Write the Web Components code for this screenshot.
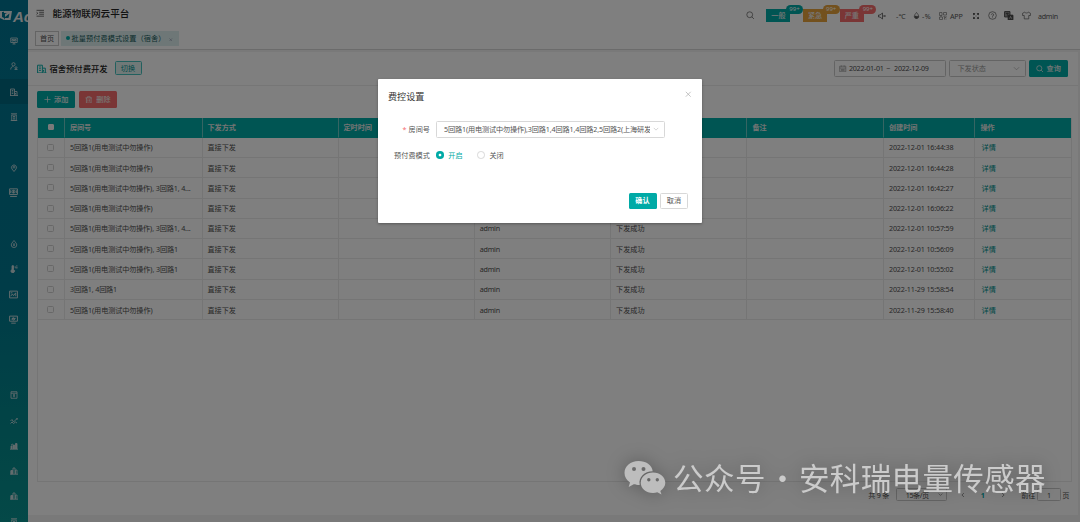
<!DOCTYPE html>
<html lang="zh-CN">
<head>
<meta charset="utf-8">
<title>能源物联网云平台</title>
<style>
html,body{margin:0;height:100%;overflow:hidden}
body{font-family:"Noto Sans","Noto Sans CJK SC",sans-serif;font-size:7.15px;color:#505050;background:#fff}
</style>
</head>
<body>
<energy-app></energy-app>
<script>
const ICONS = {
  monitor:'<path d="M1.5 2h13v9h-13zM5 14h6M8 11v3M4 5h3v3H4zM9 5h3v3H9z"/>',
  user:'<circle cx="7" cy="4.5" r="3.2"/><path d="M1.5 15c0-4 2-6 5.500-6M9 15h6"/><circle cx="12" cy="11.500" r="2"/>',
  building:'<path d="M1 15V2h8v13M9 7h5v8M0 15h16M3.500 5h3M3.500 8h3M3.500 11h3M11 10v3"/>',
  house:'<path d="M2 1.500h12M3 4h10M3.500 4v11h9V4M6 7h4M8 7v5M6 12h4M1.500 15h13"/>',
  pin:'<path d="M8 15L4 10a5 5 0 1 1 8 0z"/><circle cx="8" cy="6.500" r="1.700"/>',
  money:'<path d="M1 1.500h14v10H1zM2 15h12"/><circle cx="8" cy="6.500" r="2.600"/><path d="M8 4v5M3 4v5M13 4v5"/>',
  drop:'<path d="M8 1C5 5 2.500 7 2.500 10a5.500 5 0 0 0 11 0C13.500 7 11 5 8 1zM8 6v6M6 10h4"/>',
  thermo:'<path d="M4 1.500h3V9a3.500 3.500 0 1 1-3 0z" fill="currentColor"/><path d="M9 4h3v3M12 2h3M14 4v3"/>',
  chart:'<path d="M1 2h14v12H1zM3 11l3-4 2 3 4-5v6M3 5h3"/>',
  screen:'<path d="M1 2h14v9H1zM4 14.500h8"/><path d="M4 8l3-3 2 3 3-3"/><circle cx="8" cy="7" r="2"/>',
  list:'<path d="M2 1.500h12v13H2zM2 4.500h12M6 7.500h4M8 7.500v5M6 10h4"/>',
  trend:'<path d="M1 8l3-3 3 5 4-4 4-4M1 13l3-3 3 3 4-3 3 2M14 2v4"/>',
  bars:'<path d="M2 14V8h2v6M6 14V6h3v8M11 14V3h3v11M0 14.500h16M2 6l4-2" fill="currentColor"/>',
  bars2:'<path d="M2 14V7h3v7M6 14V2h4v12M11 14V6h3v8M0 14.500h16"/><path d="M2 7h3v7H2z" fill="currentColor"/>',
  menu:'<path d="M1 2.500h14M6 6.200h9M6 9.800h9M1 13.500h14M1 6l2.500 2L1 10"/>',
  search:'<circle cx="7" cy="7" r="5.500"/><path d="M11 11l4 4"/>',
  mute:'<path d="M1 6h3l5-4v12l-5-4H1zM11 6l4 4M15 6l-4 4"/>',
  humid:'<path d="M8 1C5 5 3 7 3 10a5 5 0 0 0 10 0C13 7 11 5 8 1z"/><path d="M4 10c2-2 5 2 8-1v3l-4 3-3-2z" fill="currentColor"/>',
  qr:'<path d="M1 1h5v6H1zM9 1h6v5H9zM1 10h6v5H1zM9 9h2v2M14 8v3h-3v4M13 14h2M4 7v3"/>',
  full:'<path d="M2 2h5L2 7zM14 2H9l5 5zM2 14h5L2 9zM14 14H9l5-5z" fill="currentColor" stroke="none"/><path d="M3 3l3.500 3.500M13 3L9.500 6.500M3 13l3.500-3.500M13 13L9.500 9.500"/>',
  help:'<circle cx="8" cy="8" r="6.800"/><path d="M6 6.500a2 2 0 1 1 2 2.300V10M8 11.500v1.200"/>',
  lang:'<path d="M1 1h9v9H1z" fill="#999"/><path d="M3 4h5M5.500 3v5"/><path d="M7 7h8v8H7z" fill="currentColor"/><path d="M9.500 13l1.500-4 2 4" stroke="#bbb"/>',
  shirt:'<path d="M5 2L1 4v4h3v6h8V8h3V4l-4-2c-1 2-5 2-6 0z"/>',
  plus:'<path d="M8 1v14M1 8h14"/>',
  trash:'<path d="M1 4h14M5 4V1.500h6V4M3 4v11h10V4M6.200 7v5M9.800 7v5"/>',
  down:'<path d="M2 5l6 6 6-6"/>', left:'<path d="M10.500 3L5 8l5.500 5"/>', right:'<path d="M5.500 3L11 8l-5.500 5"/>',
  close:'<path d="M2 2l12 12M14 2L2 14"/>',
  calendar:'<path d="M1.500 2.500h13v12h-13zM1.500 6.500h13M5 1v3M11 1v3M4 9.500h8M4 12h8"/>'
};
const define = (name, html, setup) => customElements.define(name, class extends HTMLElement {
  connectedCallback() {
    if (this.shadowRoot) return;
    const root = this.attachShadow({mode:'open'});
    const t = document.createElement('template');
    t.innerHTML = typeof html === 'function' ? html(this) : html;
    root.append(t.content.cloneNode(true));
    if (setup) setup(this, root);
  }
});

define('app-icon', el => `<style>:host{display:inline-block;flex:none;line-height:0}svg{display:block}</style>
<svg width="${el.getAttribute('size')||8}" height="${el.getAttribute('size')||8}" viewBox="0 0 16 16" fill="none" stroke="currentColor" stroke-width="${el.getAttribute('weight')||1.6}">${ICONS[el.getAttribute('name')]}</svg>`);

/* A single line of text tracked out or in to a given width. */
define('fit-text', `<style>:host{display:inline-block;flex:none;white-space:nowrap}span{display:inline-block}</style><span></span>`, (el, root) => {
  const s = root.querySelector('span');
  s.textContent = el.getAttribute('text');
  const w = +el.getAttribute('w'), now = s.getBoundingClientRect().width;
  if (w && now) { s.style.letterSpacing = (w - now) / [...s.textContent].length + 'px'; el.style.width = w + 'px'; }
});

define('side-nav', () => {
  const slots = ['monitor','user','building','house','','pin','money','','drop','thermo','chart','screen','','','list','trend','bars','bars2','bars2','house'];
  return `<style>
  :host{display:block;width:27.500px;height:522px;overflow:hidden;color:#c6d8db;background:linear-gradient(#007592,#007890 55%,#058a8c 85%,#089290)}
  .logo{height:28.500px;display:flex;align-items:center;gap:1px;color:#e4e9ea;overflow:hidden}
  .logo svg{flex:none;margin-top:3px}.logo b{font:italic bold 15px "Liberation Sans",sans-serif;margin-top:4px}
  .item{height:25.300px;display:flex;align-items:center;justify-content:center}.on{background:#006880}
  </style><div class="logo"><svg width="12" height="11" viewBox="0 0 12 11"><path d="M0 1h3l2 1H2v5l2 1v2L0 8z" fill="currentColor"/><path d="M4 1h8L10.500 10H4l1-2h3.500l1-4.500L5 7V4l2-1H4z" fill="currentColor"/></svg><b>Ac</b></div>
  ${slots.map((n,i)=>`<div class="item${i==2?' on':''}">${n?`<app-icon name="${n}" size="${n=='money'||n=='chart'||n=='screen'?9:8}" weight="1.700"></app-icon>`:''}</div>`).join('')}`;
});

define('alarm-tag', el => `<style>:host{display:block;position:relative;width:24px;height:12.500px;margin-right:12.700px;background:${el.getAttribute('color')};color:#eee;text-align:center;line-height:12px;font-weight:500}
i{position:absolute;left:19.500px;top:-4px;width:17px;height:8.500px;border-radius:5px;background:${el.getAttribute('color')};font-style:normal;font-size:6px;line-height:8.500px;color:#fff;font-weight:400}</style><slot></slot><i>99+</i>`);

define('top-bar', `<style>
:host{display:block;height:49.500px;border-bottom:1px solid #d6d6d6;box-sizing:border-box}
.row{height:31px;display:flex;align-items:center;padding:0 22px 0 8px;color:#555}
.menu{margin:-5px 8px 0 0}.title{font-size:9.600px;font-weight:500;color:#222;margin-top:-5px}
.tools{display:flex;align-items:center;margin-left:auto;height:31px}
.tabs{display:flex;gap:2px;padding-left:7px}.tab{box-sizing:border-box;height:14.500px;display:flex;align-items:center;border:1px solid #c9c9c9;padding:0 4px}
.tab.on{border-color:#dceeee;background:#dceeee;color:#175c5b;width:118px;padding:0 3.500px}.dot{width:4px;height:4px;border-radius:50%;background:#00aaa6;margin-right:2px}
.x{margin-left:auto;color:#779;margin-right:2px}
</style>
<div class="row"><app-icon class="menu" name="menu" size="8.500"></app-icon><fit-text class="title" text="能源物联网云平台" w="77"></fit-text>
<div class="tools"><app-icon name="search" size="8.500" weight="1.300" style="margin-right:12px"></app-icon>
<alarm-tag color="#00aaa6">一般</alarm-tag><alarm-tag color="#e6a23c">紧急</alarm-tag><alarm-tag color="#f56c6c">严重</alarm-tag>
<app-icon name="mute" style="margin-left:1.500px;margin-right:10px"></app-icon><fit-text text="-℃" w="10"></fit-text>
<app-icon name="humid" size="7" style="margin:0 2px 0 7px"></app-icon><fit-text text="-%" w="9"></fit-text>
<app-icon name="qr" style="margin:0 3px 0 8px;color:#888"></app-icon><fit-text text="APP" w="12.500"></fit-text>
<app-icon name="full" size="8" style="margin:0 8px 0 9px"></app-icon><app-icon name="help" size="9" weight="1.200"></app-icon>
<app-icon name="lang" size="9.500" style="margin:0 8px 0 7.500px;color:#444"></app-icon><app-icon name="shirt" size="9" weight="1.200" style="margin-right:7.500px"></app-icon><fit-text text="admin" w="20"></fit-text></div></div>
<div class="tabs"><div class="tab"><fit-text text="首页" w="14"></fit-text></div><div class="tab on"><span class="dot"></span><fit-text text="批量预付费模式设置（宿舍）" w="94"></fit-text><span class="x"><app-icon name="close" size="3.500" weight="2"></app-icon></span></div></div>`);

define('ui-button', `<style>:host{display:inline-flex;align-items:center;justify-content:center;gap:3.500px;box-sizing:border-box;width:var(--w,38px);height:var(--h,17px);border:1px solid var(--line,transparent);background:var(--bg,#00aaa6);color:var(--fg,#eee);border-radius:1.500px;font-weight:var(--weight,500);line-height:1}</style><slot></slot>`);

define('page-title', `<style>
:host{display:flex;align-items:center;height:33.500px;box-sizing:border-box;border-bottom:1px solid #ececec;padding:0 10.500px 0 9px}
b{font-weight:500;font-size:8.300px;color:#222;margin:0 7px 0 3px}
.field{box-sizing:border-box;height:17px;border:1px solid #c8c8c8;border-radius:1.500px;display:flex;align-items:center}
.date{width:112px;margin-left:auto;padding-left:4.500px;gap:2.500px}.sel{width:77px;margin:0 3.500px 0 3px;padding:0 5px 0 8px;color:#999;justify-content:space-between}
</style><app-icon name="building" size="9.500" style="color:#00aaa6"></app-icon><b><fit-text text="宿舍预付费开发" w="58"></fit-text></b>
<ui-button style="--w:27px;--h:14px;--line:#45c0bd;--bg:#e0f2f1;--fg:#00928f;--weight:400">切换</ui-button>
<div class="field date"><app-icon name="calendar" size="7.500" style="color:#999"></app-icon><fit-text text="2022-01-01" w="34.500"></fit-text><fit-text text="~" w="5" style="margin:0 .3px"></fit-text><fit-text text="2022-12-09" w="34.500"></fit-text></div>
<div class="field sel"><fit-text text="下发状态" w="28.500"></fit-text><app-icon name="down" size="7" weight="1.300"></app-icon></div>
<ui-button style="--w:38.500px"><app-icon name="search" size="7.500"></app-icon>查询</ui-button>`);

define('data-table', () => {
  const a='5回路1(用电测试中勿操作)', rows=[[a,82.5,'12-01 16:44:38'],[a,82.5,'12-01 16:44:28'],[a+', 3回路1, 4...',120.5,'12-01 16:42:27'],[a,82.5,'12-01 16:06:22'],[a+', 3回路1, 4...',120.5,'12-01 10:57:59'],[a+', 3回路1',108,'12-01 10:56:09'],[a+', 3回路1',108,'12-01 10:55:02'],['3回路1, 4回路1',47,'11-29 15:58:54'],[a,82.5,'11-29 15:58:40']];
  const f=(t,w)=>`<fit-text text="${t}" w="${w}"></fit-text>`;
  return `<style>
  :host{display:block;box-sizing:border-box;width:1034.500px;height:364.500px;border:1px solid #ebebeb;border-top:0}
  .r{display:grid;grid-template-columns:27px 137.500px 136px 136.300px 136.300px 136.300px 136.600px 91.500px 1fr;height:20.280px}
  .r>div{display:flex;align-items:center;box-sizing:border-box;padding-left:5px;border-right:1px solid #ebebeb;border-bottom:1px solid #ebebeb}
  .r>div:first-child{padding:0;justify-content:center}.r>div:last-child{border-right:0}
  .h{background:#00aaa6;color:#e8e8e8;font-weight:700}.h>div{border-bottom-color:#00aaa6;border-right-color:#6ccac7}
  i{width:7px;height:7px;box-sizing:border-box;border:1px solid #d0d0d0;border-radius:1.500px;margin-right:2px}.h i{background:#f4f4f4;border-color:#f4f4f4;margin:0;width:6.500px;height:6.500px;border-radius:1px}
  .link{color:#00918e}
  </style><div class="r h"><div><i></i></div>${[['房间号',21],['下发方式',28.5],['定时时间',28.5],['操作人',21],['下发状态',28.5],['备注',14],['创建时间',28.5],['操作',14]].map(c=>`<div>${f(...c)}</div>`).join('')}</div>
  ${rows.map(r=>`<div class="r"><div><i></i></div><div>${f(r[0],r[1])}</div><div>${f('直接下发',28.5)}</div><div></div><div>${f('admin',20)}</div><div>${f('下发成功',28.5)}</div><div></div><div>${f('2022-'+r[2],64.5)}</div><div class="link" style="padding-left:6px">${f('详情',14.3)}</div></div>`).join('')}`;
});

define('page-pager', `<style>:host{display:flex;align-items:center;justify-content:flex-end;height:25px;padding-right:8.500px}
.box{box-sizing:border-box;height:13.500px;border:1px solid #c8c8c8;border-radius:1.500px;display:flex;align-items:center;justify-content:center}</style>
<fit-text text="共 9 条" w="21"></fit-text><div class="box" style="width:51px;margin:0 12.500px 0 7px;gap:9px;padding-left:5px"><fit-text text="15条/页" w="23"></fit-text><app-icon name="down" size="5"></app-icon></div>
<app-icon name="left" size="6"></app-icon><span style="color:#00aaa6;margin:0 15px 0 15px;font-weight:700">1</span><app-icon name="right" size="6"></app-icon><fit-text text="前往" w="14" style="margin:0 2px 0 15.500px"></fit-text><div class="box" style="width:23.500px;margin-right:1.500px">1</div>页`);

define('fee-dialog', `<style>
:host{display:block;box-sizing:border-box;width:324px;height:143.500px;background:#fff;border-radius:1px;box-shadow:0 1px 3px rgba(0,0,0,.3);padding:9px 14px 0 10px;color:#555}
header{display:flex;justify-content:space-between;align-items:center;font-size:9.100px;color:#333;height:15px}
.line{display:flex;align-items:center}.lab{width:42px;display:flex;justify-content:flex-end;margin-right:6px;gap:2px}
em{color:#f56c6c;font-style:normal}.select{box-sizing:border-box;width:229px;height:17px;border:1px solid #d8d8d8;border-radius:1.500px;display:flex;align-items:center;padding:0 4px 0 7px;gap:3px;color:#555}
.clip{width:206px;overflow:hidden;display:flex}
i{box-sizing:border-box;width:7.500px;height:7.500px;border:1px solid #d8d8d8;border-radius:50%;margin-right:4.700px}i.on{border:0;background:radial-gradient(circle,#fff 1.100px,#00aaa6 1.700px)}
footer{display:flex;justify-content:flex-end;gap:3.500px;margin-top:33px}
</style><header><fit-text text="费控设置" w="36.500"></fit-text><app-icon name="close" size="6.500" weight="1.700" style="color:#aaa;margin:-3px -3.500px 0 0"></app-icon></header>
<div class="line" style="margin-top:17.500px"><div class="lab"><em>*</em><fit-text text="房间号" w="21.500"></fit-text></div><div class="select"><div class="clip"><fit-text text="5回路1(用电测试中勿操作),3回路1,4回路1,4回路2,5回路2(上海研发" w="207"></fit-text></div><app-icon name="down" size="6" weight="1.300" style="color:#aaa"></app-icon></div></div>
<div class="line" style="margin-top:12.500px;height:10px"><div class="lab"><fit-text text="预付费模式" w="36"></fit-text></div><i class="on"></i><fit-text text="开启" w="14.500" style="color:#00aaa6;margin-right:14.500px"></fit-text><i></i><fit-text text="关闭" w="14.500"></fit-text></div>
<footer><ui-button style="--w:28px;--h:16px;--fg:#fff;--weight:700">确认</ui-button><ui-button style="--w:28px;--h:16px;--bg:#fff;--fg:#555;--line:#d8d8d8;--weight:400">取消</ui-button></footer>`);

define('account-mark', `<style>:host{display:flex;align-items:center;width:422px;height:44px;color:#cbcbcb;font-family:"Noto Sans CJK SC",sans-serif;font-size:30.500px;line-height:44px;filter:drop-shadow(0 0 9px rgba(0,0,0,.3))}
svg{flex:none;margin-right:7px}fit-text{margin-top:-2px}</style>
<svg width="42" height="36" viewBox="0 0 42 36"><path fill="#bdbdbd" fill-rule="evenodd" d="M14.500 1C6.500 1 .5 6.200.5 13c0 4 2 7.200 5.500 9.400L4.700 27l5-2.800c1.800.6 3.500.8 6 .8-1.500-8 5-13.800 13-13.700C28 5 22 1 14.500 1zM10 7a2 2 0 1 1 0 4 2 2 0 0 1 0-4zm9.500 0a2 2 0 1 1 0 4 2 2 0 0 1 0-4z"/><path fill="#bdbdbd" fill-rule="evenodd" d="M29 12.500c-7 0-12.300 4.600-12.300 10.300S22 33 29 33c1.500 0 3-.2 4.300-.7l4.200 2.300-1.200-3.700c3-2 5-4.700 5-8.100 0-5.700-5.300-10.300-12.300-10.300zM24.800 18a1.700 1.700 0 1 1 0 3.400 1.700 1.700 0 0 1 0-3.400zm8.500 0a1.700 1.700 0 1 1 0 3.400 1.700 1.700 0 0 1 0-3.400z"/></svg>
<fit-text text="公众号" w="93"></fit-text><fit-text text="·" style="width:33px;text-align:center"></fit-text><fit-text text="安科瑞电量传感器" w="247"></fit-text>`);

define('energy-app', `<style>
:host{display:block;position:relative;width:1080px;height:522px;overflow:hidden;background:#fff}
.layout{display:grid;grid-template-columns:28px 1fr;height:522px}
main{display:flex;flex-direction:column;min-width:0}
.content{flex:1;background:#f2f2f2;padding:2.500px 2px 7px 0}.card{background:#fff;height:463px;box-sizing:border-box}
.actions{display:flex;gap:4px;padding:5.500px 0 9.500px 9px}.wrap{padding-left:9px}
.mask{position:absolute;inset:0;background:rgba(0,0,0,.5)}fee-dialog{position:absolute;left:378px;top:79px}account-mark{position:absolute;left:624px;top:456px}
</style><div class="layout"><side-nav></side-nav><main><top-bar></top-bar><div class="content"><div class="card"><page-title></page-title>
<div class="actions"><ui-button><app-icon name="plus" size="7"></app-icon>添加</ui-button><ui-button style="--bg:#f56c6c"><app-icon name="trash" size="7.500"></app-icon>删除</ui-button></div>
<div class="wrap"><data-table></data-table></div><page-pager></page-pager></div></div></main></div>
<div class="mask"></div><fee-dialog></fee-dialog><account-mark></account-mark>`);
</script>
</body>
</html>
